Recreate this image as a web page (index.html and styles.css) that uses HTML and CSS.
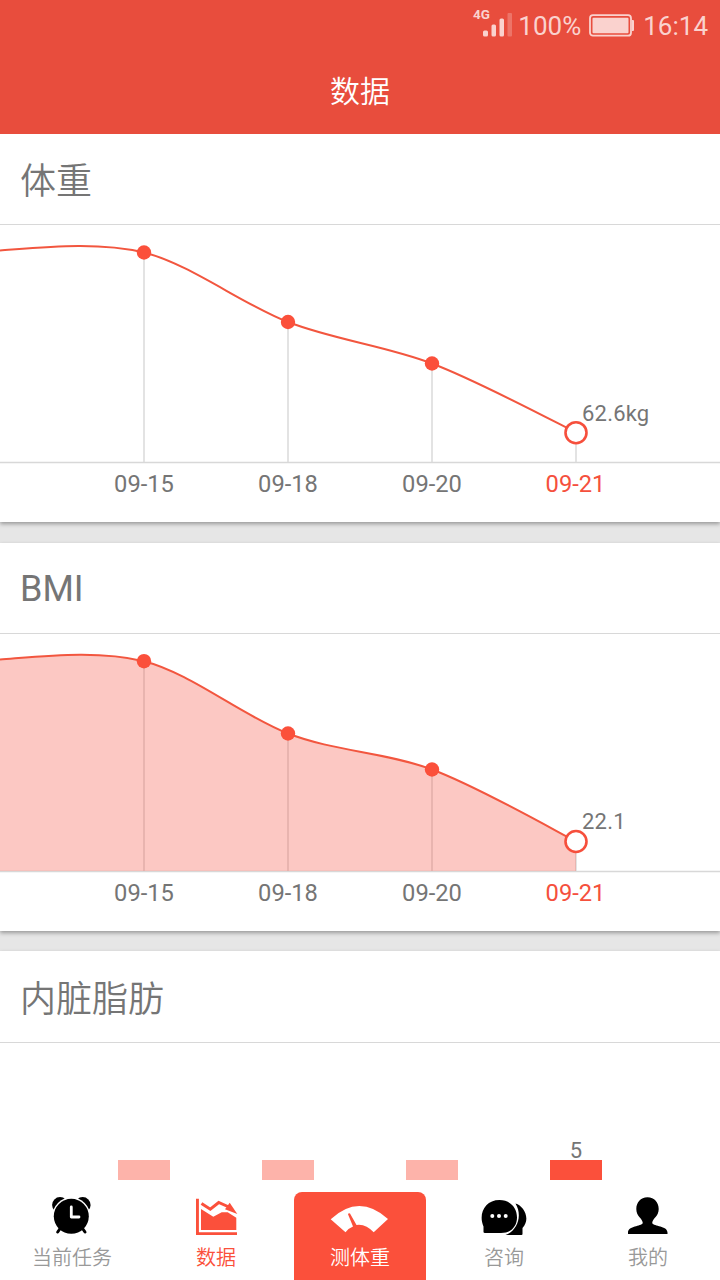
FILE: index.html
```html
<!DOCTYPE html>
<html lang="zh-CN">
<head>
<meta charset="utf-8">
<title>数据</title>
<link rel="stylesheet" href="styles.css">
</head>
<body>
<div class="app">
  <header class="top">
    <div class="status">
      <svg class="signal" width="42" height="34" viewBox="0 0 42 34">
        <text class="network" x="1" y="14.800">4G</text>
        <rect x="11" y="26.500" width="5" height="6" rx="1.500"/>
        <rect x="19.500" y="20.500" width="4.500" height="12" rx="1.500"/>
        <rect x="27.500" y="14.500" width="4.500" height="18" rx="1.500"/>
        <rect class="dim" x="35.500" y="9" width="4.500" height="23.500" rx="1"/>
      </svg>
      <span class="percent">100%</span>
      <svg class="battery" width="46" height="24" viewBox="0 0 46 24">
        <rect class="shell" x="1" y="1.200" width="41" height="20.500" rx="3"/>
        <rect x="3.500" y="3.700" width="36" height="15.500" rx="1"/>
        <path d="M43 6h1q1 0 1 1v9q0 1-1 1H43z"/>
      </svg>
      <span class="time">16:14</span>
    </div>
    <h1 class="title">数据</h1>
  </header>

  <main class="cards">
    <section class="card">
      <h2 class="card-title cjk">体重</h2>
      <svg class="chart" width="720" height="297" viewBox="0 225 720 297">
        <path class="rule" d="M144 253V462M288 322V462M432 363V462M576 432V462M0 462.500H720"/>
        <path class="line" d="M0 250.500C46 247 98 241.500 144 252.500C190 264 242 304.200 288 322C334 339.800 386 345.900 432 363.500C478 381.100 553 421 576 432.500"/>
        <circle class="dot" cx="144" cy="252.500" r="7.200"/>
        <circle class="dot" cx="288" cy="322" r="7.200"/>
        <circle class="dot" cx="432" cy="363.500" r="7.200"/>
        <circle class="ring" cx="576" cy="432.700" r="10.500"/>
        <text class="value" x="582" y="420.700">62.6kg</text>
        <text class="date" x="144" y="492.400">09-15</text>
        <text class="date" x="288" y="492.400">09-18</text>
        <text class="date" x="432" y="492.400">09-20</text>
        <text class="date current" x="575.500" y="492.400">09-21</text>
      </svg>
    </section>

    <section class="card">
      <h2 class="card-title">BMI</h2>
      <svg class="chart" width="720" height="297" viewBox="0 634 720 297">
        <path class="rule" d="M144 661V871M288 733V871M432 769V871M576 841V871M0 871.500H720"/>
        <path class="area" d="M0 659.500C46 656 98 650 144 661.200C190 672.800 242 715.700 288 733.500C334 751.300 386 752.300 432 769.500C478 786.700 553 829.500 576 841.500V871H0z"/>
        <path class="line" d="M0 659.500C46 656 98 650 144 661.200C190 672.800 242 715.700 288 733.500C334 751.300 386 752.300 432 769.500C478 786.700 553 829.500 576 841.500"/>
        <circle class="dot" cx="144" cy="661.200" r="7.200"/>
        <circle class="dot" cx="288" cy="733.500" r="7.200"/>
        <circle class="dot" cx="432" cy="769.500" r="7.200"/>
        <circle class="ring" cx="576" cy="841.500" r="10.500"/>
        <text class="value" x="582" y="829.200">22.1</text>
        <text class="date" x="144" y="901.300">09-15</text>
        <text class="date" x="288" y="901.300">09-18</text>
        <text class="date" x="432" y="901.300">09-20</text>
        <text class="date current" x="575.500" y="901.300">09-21</text>
      </svg>
    </section>

    <section class="card">
      <h2 class="card-title cjk tall">内脏脂肪</h2>
      <svg class="chart" width="720" height="137" viewBox="0 1043 720 137">
        <path class="bar" d="M118 1160h52v20h-52zM262 1160h52v20h-52zM406 1160h52v20h-52z"/>
        <path class="bar-current" d="M550 1160h52v20h-52z"/>
        <text class="value center" x="576" y="1158">5</text>
      </svg>
    </section>
  </main>

  <nav class="tabs">
    <a class="tab">
      <svg class="icon" width="48" height="48" viewBox="0 0 48 48">
        <circle cx="12" cy="13" r="7.900"/>
        <circle cx="34.700" cy="13" r="7.900"/>
        <circle class="cut" cx="23.300" cy="24.300" r="18.900"/>
        <path class="stroke" d="M12.500 36L9.700 40M34.200 36L37 40"/>
        <circle cx="23.300" cy="24.300" r="17.500"/>
        <path class="hands" d="M23.300 15V25H31"/>
      </svg>
      <span>当前任务</span>
    </a>
    <a class="tab active">
      <svg class="icon" width="48" height="48" viewBox="0 0 48 48">
        <path d="M4 6.700h2.900V40.300H45V43H4z"/>
        <path d="M9 17L21.300 24.700 29.700 20.300H35.700L44.300 25.700V38H9z"/>
        <path class="trend" d="M9.500 11.500L18.300 17.200 26.700 10.500 38 15.500"/>
        <path d="M37.700 10.700L45.300 22 33 17.200z"/>
      </svg>
      <span>数据</span>
    </a>
    <a class="tab measure">
      <svg class="icon" width="60" height="48" viewBox="0 0 60 48">
        <path d="M.7 27.300Q29 1 58 27L43.700 40.300Q37 33 29 32.700L26.500 33 20 21.500Q18.500 20.500 18 22.300L23 34.500Q18 36.500 15.500 40.300z"/>
      </svg>
      <span>测体重</span>
    </a>
    <a class="tab">
      <svg class="icon" width="48" height="48" viewBox="0 0 48 48">
        <path d="M35.500 11.500C44 14 51 27 42.500 36V42Q42.500 43 41.500 43H25.500C37 39 43 24 35.500 11.500z"/>
        <path d="M3.500 40V34.500C-2 22 5 8 19.500 8C30 8 37 15.500 37 25.500C37 34 31.500 41 21 41H5Q3.500 41 3.500 40z"/>
        <g class="cut"><circle cx="12.300" cy="24" r="2"/><circle cx="19" cy="24" r="2"/><circle cx="25.700" cy="24" r="2"/></g>
      </svg>
      <span>咨询</span>
    </a>
    <a class="tab">
      <svg class="icon" width="48" height="48" viewBox="0 0 48 48">
        <path d="M23.500 5.300C30.500 5.300 34.700 10.500 34.700 17C34.700 24.500 28.700 26 28.200 31C30 34.800 43.200 33.500 43.500 40.500V42H4V40.500C4.300 33.500 17 34.800 18.800 31C18.300 26 12.300 24.500 12.300 17C12.300 10.500 16.500 5.300 23.500 5.300z"/>
      </svg>
      <span>我的</span>
    </a>
  </nav>
</div>
</body>
</html>
```
FILE: styles.css
```css
* { box-sizing: border-box; }
body {
  margin: 0;
  font-family: Roboto, "Noto Sans CJK SC", sans-serif;
  color: #757575;
}
.app {
  display: flex;
  flex-direction: column;
  width: 720px;
  height: 1280px;
  overflow: hidden;
  background: #e6e6e6;
}
.top {
  flex: none;
  height: 134px;
  background: #e84d3d;
  color: #fff;
}
.status {
  display: flex;
  align-items: center;
  justify-content: flex-end;
  height: 52px;
  padding-right: 12px;
  color: #fad2ce;
  fill: #fad2ce;
  font-size: 26px;
}
.signal { margin-bottom: 11px; }
.network { font-size: 13.5px; font-weight: 700; }
.dim { opacity: .3; }
.percent { margin-left: 4px; }
.battery { margin-left: 8px; }
.time { margin-left: 8px; }
.shell { fill: none; stroke: #fad2ce; stroke-width: 1.8; }
.title {
  margin: 0;
  font-size: 30px;
  font-weight: 350;
  line-height: 80px;
  text-align: center;
}
.cards {
  display: flex;
  flex: none;
  flex-direction: column;
  gap: 21px;
  height: 1046px;
  overflow: hidden;
}
.card {
  flex: none;
  background: #fff;
  box-shadow: 0 2px 4px rgba(0, 0, 0, .34);
}
.card:nth-child(3) { margin-top: -1px; }
.card-title {
  height: 91px;
  margin: 0;
  padding-left: 20px;
  border-bottom: 1px solid #d8d8d8;
  font-size: 36px;
  font-weight: 400;
  line-height: 92px;
}
.card-title.cjk { line-height: 97px; font-weight: 350; }
.card-title.tall { height: 92px; line-height: 98px; }
.chart { display: block; }
.rule { fill: none; stroke: #d8d8d8; stroke-width: 1.4; }
.line { fill: none; stroke: #f2563f; stroke-width: 2; }
.area { fill: #f44837; fill-opacity: .3; }
.dot { fill: #fb503b; }
.ring { fill: #fff; stroke: #f64f3c; stroke-width: 2.6; }
.value { fill: #757575; font-size: 22px; letter-spacing: .2px; }
.center { text-anchor: middle; letter-spacing: 0; }
.date { fill: #757575; font-size: 23.7px; text-anchor: middle; }
.current { fill: #f5503d; }
.bar { fill: #fdb3aa; }
.bar-current { fill: #fb503b; }
.tabs {
  display: grid;
  flex: none;
  grid-template-columns: repeat(5, 144px);
  height: 100px;
  background: #fff;
}
.tab {
  display: flex;
  flex-direction: column;
  align-items: center;
  padding-top: 12px;
  color: #999;
  font-size: 20px;
  font-weight: 350;
  line-height: 36px;
}
.icon { fill: #000; }
.stroke { fill: none; stroke: #000; stroke-width: 3; stroke-linecap: round; }
.hands { fill: none; stroke: #fff; stroke-width: 2.8; stroke-linecap: round; stroke-linejoin: round; }
.active { color: #fb503b; }
.active .icon { fill: #fb503b; }
.trend { fill: none; stroke: #fb503b; stroke-width: 3; }
.cut { fill: #fff; }
.measure {
  margin: 12px 6px 0;
  padding-top: 0;
  border-radius: 8px 8px 0 0;
  background: #fb503b;
  color: #fff;
}
.measure .icon { fill: #fff; }
```
